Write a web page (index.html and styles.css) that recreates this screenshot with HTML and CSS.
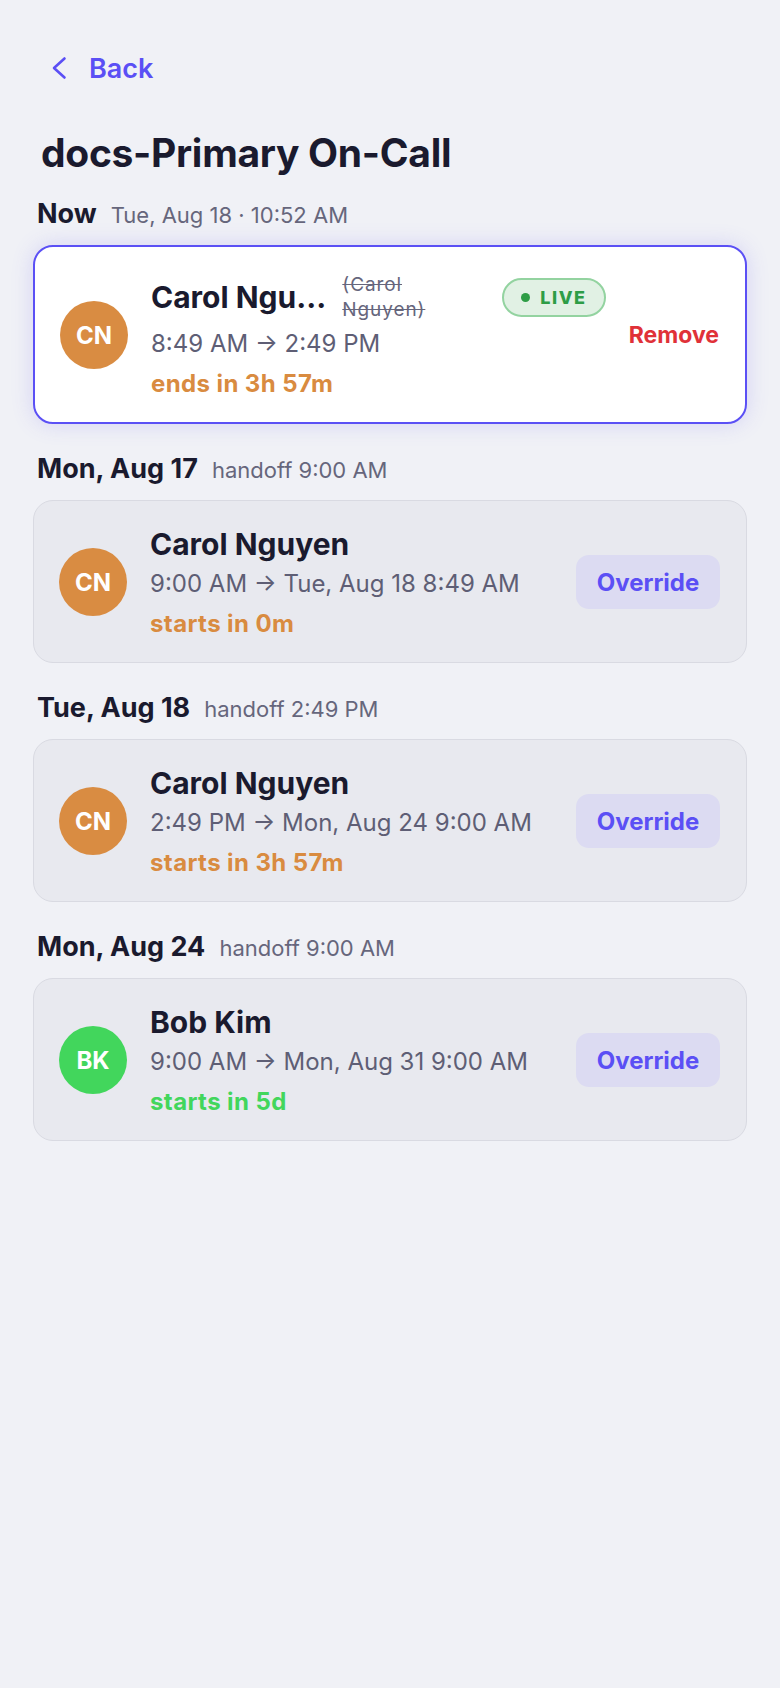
FILE: index.html
```html
<!DOCTYPE html>
<html lang="en">
<head>
    <meta charset="UTF-8">
    <meta name="viewport" content="width=device-width, initial-scale=1.0">
    <title>docs-Primary On-Call</title>
    <link rel="stylesheet" href="styles.css">
</head>
<body>
    <div class="page">
        <a class="back" href="#">
            <svg class="back-icon" viewBox="0 0 16 24" width="16" height="24">
                <path d="M13.5 2.5 L3 12 L13.5 21.5" fill="none" stroke="currentColor" stroke-width="2.6" stroke-linecap="round" stroke-linejoin="round"/>
            </svg>
            <span>Back</span>
        </a>

        <h1>docs-Primary On-Call</h1>

        <section class="slot">
            <div class="slot-head"><span class="slot-day">Now</span><span class="slot-meta">Tue, Aug 18 · 10:52 AM</span></div>
            <div class="card card-live">
                <div class="avatar orange">CN</div>
                <div class="info">
                    <div class="name-row">
                        <span class="name" title="Carol Nguyen">Carol Ngu...</span>
                        <span class="original">(Carol Nguyen)</span>
                        <span class="live"><span class="live-dot"></span>LIVE</span>
                    </div>
                    <div class="range">8:49 AM → 2:49 PM</div>
                    <div class="when orange-text">ends in 3h 57m</div>
                </div>
                <button class="remove">Remove</button>
            </div>
        </section>

        <section class="slot">
            <div class="slot-head"><span class="slot-day">Mon, Aug 17</span><span class="slot-meta">handoff 9:00 AM</span></div>
            <div class="card">
                <div class="avatar orange">CN</div>
                <div class="info">
                    <div class="name-row"><span class="name">Carol Nguyen</span></div>
                    <div class="range">9:00 AM → Tue, Aug 18 8:49 AM</div>
                    <div class="when orange-text">starts in 0m</div>
                </div>
                <button class="override">Override</button>
            </div>
        </section>

        <section class="slot">
            <div class="slot-head"><span class="slot-day">Tue, Aug 18</span><span class="slot-meta">handoff 2:49 PM</span></div>
            <div class="card">
                <div class="avatar orange">CN</div>
                <div class="info">
                    <div class="name-row"><span class="name">Carol Nguyen</span></div>
                    <div class="range">2:49 PM → Mon, Aug 24 9:00 AM</div>
                    <div class="when orange-text">starts in 3h 57m</div>
                </div>
                <button class="override">Override</button>
            </div>
        </section>

        <section class="slot">
            <div class="slot-head"><span class="slot-day">Mon, Aug 24</span><span class="slot-meta">handoff 9:00 AM</span></div>
            <div class="card">
                <div class="avatar green">BK</div>
                <div class="info">
                    <div class="name-row"><span class="name">Bob Kim</span></div>
                    <div class="range">9:00 AM → Mon, Aug 31 9:00 AM</div>
                    <div class="when green-text">starts in 5d</div>
                </div>
                <button class="override">Override</button>
            </div>
        </section>
    </div>
</body>
</html>
```

FILE: styles.css
```css
body {
    margin: 0;
    background-color: #f0f1f6;
    font-family: Inter, "Liberation Sans", sans-serif;
    color: #1a1a2e;
}
.page {
    padding: 44px 33px 40px;
}
.back {
    display: inline-flex;
    align-items: center;
    gap: 22px;
    margin-left: 18px;
    height: 48px;
    color: #5b4ff5;
    font-size: 27px;
    font-weight: 600;
    text-decoration: none;
}
.back-icon {
    display: block;
}
h1 {
    margin: 38px 0 24px 8px;
    font-size: 39px;
    line-height: 46px;
    font-weight: 700;
    letter-spacing: -0.3px;
}
.slot {
    margin-bottom: 31px;
}
.slot-head {
    display: flex;
    align-items: baseline;
    gap: 14px;
    margin: 0 0 16px 4px;
    line-height: 28px;
}
.slot-day {
    font-size: 27px;
    font-weight: 700;
}
.slot-meta {
    font-size: 22px;
    color: #66667c;
}
.card {
    display: flex;
    align-items: center;
    gap: 23px;
    padding: 25px 26px 24px 25px;
    background-color: #e8e9ef;
    border: 1.5px solid #d9dae2;
    border-radius: 20px;
}
.card-live {
    background-color: #ffffff;
    border: 2px solid #5b50f5;
    box-shadow: 0 0 22px rgba(91, 80, 245, 0.18);
}
.avatar {
    flex: none;
    width: 68px;
    height: 68px;
    border-radius: 50%;
    display: flex;
    align-items: center;
    justify-content: center;
    color: #ffffff;
    font-size: 24px;
    font-weight: 700;
}
.orange {
    background-color: #d98c42;
}
.green {
    background-color: #42d65c;
}
.info {
    flex: 1;
    min-width: 0;
}
.name-row {
    display: flex;
    align-items: center;
    min-height: 36px;
}
.name {
    font-size: 30px;
    line-height: 36px;
    font-weight: 700;
    white-space: nowrap;
}
.original {
    width: 92px;
    margin-left: 16px;
    font-size: 19px;
    line-height: 25px;
    letter-spacing: 0.9px;
    color: #66667c;
    text-decoration: line-through;
}
.live {
    margin-left: auto;
    display: inline-flex;
    align-items: center;
    gap: 10px;
    height: 39px;
    padding: 0 17px;
    box-sizing: border-box;
    border: 2px solid #93d3a0;
    border-radius: 20px;
    background-color: #e1f1e4;
    color: #2e9d46;
    font-size: 18px;
    font-weight: 800;
    letter-spacing: 1.6px;
}
.live-dot {
    width: 9px;
    height: 9px;
    border-radius: 50%;
    background-color: #2e9d46;
}
.range {
    margin-top: 7px;
    font-size: 24px;
    line-height: 29px;
    color: #5e5e75;
}
.when {
    margin-top: 11px;
    font-size: 24px;
    line-height: 29px;
    font-weight: 700;
    letter-spacing: 0.4px;
}
.orange-text {
    color: #d98b40;
}
.green-text {
    color: #42d65c;
}
button {
    font-family: inherit;
    cursor: pointer;
}
.remove {
    flex: none;
    padding: 0;
    border: none;
    background: none;
    color: #e03138;
    font-size: 23px;
    font-weight: 700;
}
.override {
    flex: none;
    width: 144px;
    height: 54px;
    border: none;
    border-radius: 13px;
    background-color: #dcdbf2;
    color: #5b4ff5;
    font-size: 24px;
    font-weight: 700;
}
```
